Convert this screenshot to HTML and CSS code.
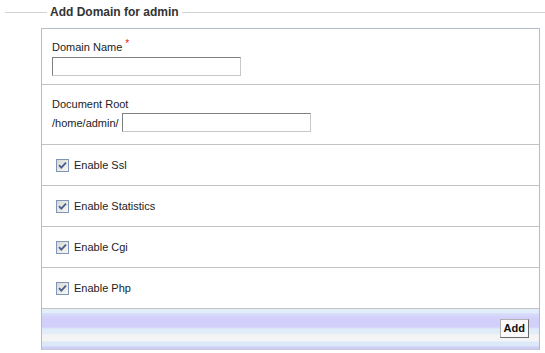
FILE: index.html
```html
<!doctype html>
<html>
    <head>
        <meta charset=utf-8>
        <title>Add Domain</title>
        <link rel="stylesheet" href="styles.css">
    </head>
    <body>
        <fieldset class="domain-form">
            <legend>Add Domain for admin</legend>
            <div class="box">
                <div class="row">
                    <label for="domain">Domain Name <span class="req">*</span></label>
                    <input type="text" id="domain" class="field">
                </div>
                <div class="row root-row">
                    <label for="docroot">Document Root</label>
                    <div class="inline">
                        <span>/home/admin/</span>
                        <input type="text" id="docroot" class="field">
                    </div>
                </div>
                <div class="row check-row">
                    <span class="check"><svg width="13" height="13" viewBox="0 0 13 13"><use href="#cb"/></svg></span>
                    <span>Enable Ssl</span>
                </div>
                <div class="row check-row">
                    <span class="check"><svg width="13" height="13" viewBox="0 0 13 13"><use href="#cb"/></svg></span>
                    <span>Enable Statistics</span>
                </div>
                <div class="row check-row">
                    <span class="check"><svg width="13" height="13" viewBox="0 0 13 13"><use href="#cb"/></svg></span>
                    <span>Enable Cgi</span>
                </div>
                <div class="row check-row">
                    <span class="check"><svg width="13" height="13" viewBox="0 0 13 13"><use href="#cb"/></svg></span>
                    <span>Enable Php</span>
                </div>
                <div class="actions">
                    <button type="submit">Add</button>
                </div>
            </div>
        </fieldset>

        <svg width="0" height="0" class="defs">
            <defs>
                <linearGradient id="cbfill" x1="0" y1="0" x2="1" y2="1">
                    <stop offset="0" stop-color="#d8d8d2"/>
                    <stop offset="1" stop-color="#f8f8f6"/>
                </linearGradient>
                <g id="cb">
                    <rect x="0.5" y="0.5" width="12" height="12" fill="url(#cbfill)" stroke="#8096b8"/>
                    <path d="M3 6.2 L5.3 8.6 L10 3.6" fill="none" stroke="#4b5e8e" stroke-width="1.8"/>
                </g>
            </defs>
        </svg>
    </body>
</html>
```

FILE: styles.css
```css
* {
  box-sizing: border-box;
}

body {
  margin: 0;
  padding-top: 5px;
  font: 11px/14px "Liberation Sans", Arial, sans-serif;
  color: #222;
  background: #fff;
}

.defs {
  position: absolute;
}

.domain-form {
  margin: 0 0 0 5px;
  padding: 9px 5px 0 36px;
  border: 0;
  border-top: 1px solid #d2d2d2;
}

.domain-form legend {
  margin-left: 6px;
  padding: 0 3px;
  font-weight: bold;
  font-size: 12px;
  color: #333;
}

.box {
  width: 499px;
  border: 1px solid #b4bccb;
  border-bottom-color: #c4cad6;
}

.row {
  border-bottom: 1px solid #c3c3c3;
  padding: 11px 10px 8px;
}

.root-row {
  padding-top: 12px;
  padding-bottom: 9px;
}

.row label {
  display: block;
}

.req {
  color: #d22;
  position: relative;
  top: -4px;
  font-size: 10px;
}

.field {
  display: block;
  width: 189px;
  height: 19px;
  margin-top: 2px;
  border: 1px solid #c8c8c8;
  border-top-color: #808080;
  border-left-color: #808080;
  background: #fff;
}

.inline {
  display: flex;
  align-items: center;
  gap: 3px;
  margin-top: 2px;
  padding-bottom: 3px;
}

.inline .field {
  margin-top: 0;
}

.check-row {
  display: flex;
  align-items: center;
  gap: 5px;
  height: 41px;
  padding: 0 14px;
}

.check svg {
  display: block;
}

.actions {
  height: 40px;
  display: flex;
  justify-content: flex-end;
  align-items: center;
  padding: 0 10px 2px 0;
  background: linear-gradient(#e2eef9 0, #e2eef9 4px, #dae0fa 4px, #d2d0fb 9px, #d2d0fb 18px, #e0ecf8 20px, #e0ecf8 24px, #f4f4f4 26px, #f4f4f4 32px, #dbe8f8 33px, #dbe8f8 37px, #cfcdf8 38px);
}

.actions button {
  height: 19px;
  padding: 0 3px;
  font: bold 11px "Liberation Sans", Arial, sans-serif;
  color: #111;
  background: #fafafa;
  border: 1px solid #6a6a6a;
  border-top-color: #b0b0b0;
  border-left-color: #b0b0b0;
  cursor: pointer;
}
```
